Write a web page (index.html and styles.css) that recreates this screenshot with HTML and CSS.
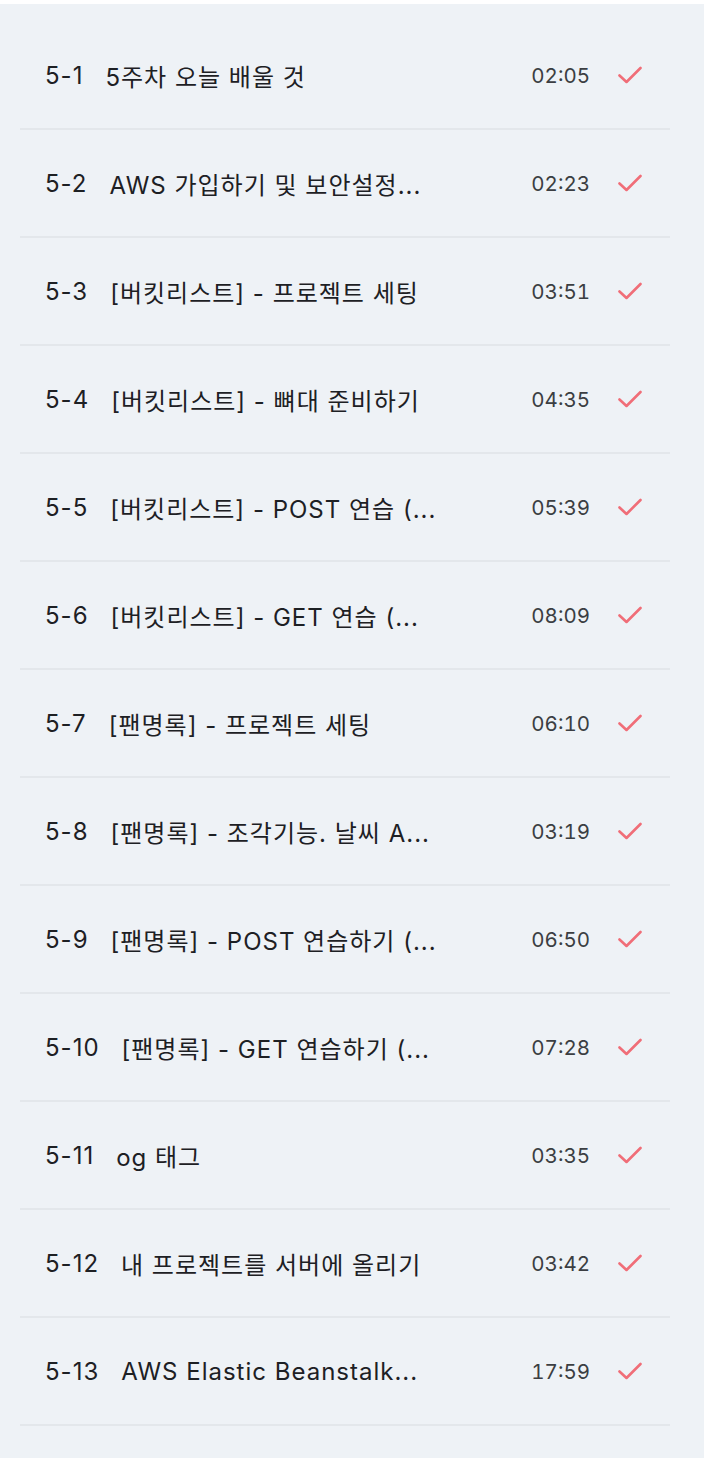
FILE: index.html
```html
<!DOCTYPE html>
<html lang="ko">
<head>
    <meta charset="UTF-8">
    <meta name="viewport" content="width=device-width, initial-scale=1.0">
    <title>5주차 강의 목록</title>
    <link rel="stylesheet" href="styles.css">
</head>
<body>
    <div class="panel">
        <ul class="lectures" id="lectures">
            <!-- lecture rows are inserted here -->
        </ul>
    </div>

    <script>
        const lectures = [
            { no: "5-1", title: "5주차 오늘 배울 것", time: "02:05" },
            { no: "5-2", title: "AWS 가입하기 및 보안설정...", time: "02:23" },
            { no: "5-3", title: "[버킷리스트] - 프로젝트 세팅", time: "03:51" },
            { no: "5-4", title: "[버킷리스트] - 뼈대 준비하기", time: "04:35" },
            { no: "5-5", title: "[버킷리스트] - POST 연습 (...", time: "05:39" },
            { no: "5-6", title: "[버킷리스트] - GET 연습 (...", time: "08:09" },
            { no: "5-7", title: "[팬명록] - 프로젝트 세팅", time: "06:10" },
            { no: "5-8", title: "[팬명록] - 조각기능. 날씨 A...", time: "03:19" },
            { no: "5-9", title: "[팬명록] - POST 연습하기 (...", time: "06:50" },
            { no: "5-10", title: "[팬명록] - GET 연습하기 (...", time: "07:28" },
            { no: "5-11", title: "og 태그", time: "03:35" },
            { no: "5-12", title: "내 프로젝트를 서버에 올리기", time: "03:42" },
            { no: "5-13", title: "AWS Elastic Beanstalk...", time: "17:59" }
        ];

        const list = document.getElementById('lectures');
        lectures.forEach(item => {
            const row = document.createElement('li');
            row.className = 'lecture';
            row.innerHTML = `
                <span class="lecture-no">${item.no}</span>
                <span class="lecture-title">${item.title}</span>
                <span class="lecture-time">${item.time}</span>
                <svg class="lecture-check" width="24" height="20" viewBox="0 0 24 20">
                    <path d="M1.5 10.5 L8.5 17 L22.5 3" fill="none" stroke="#f06e78" stroke-width="2.6" stroke-linecap="round" stroke-linejoin="round"/>
                </svg>
            `;
            list.appendChild(row);
        });
    </script>
</body>
</html>
```

FILE: styles.css
```css
* {
    box-sizing: border-box;
    margin: 0;
    padding: 0;
}

body {
    background-color: #ffffff;
    font-family: 'Inter', 'Noto Sans CJK KR', sans-serif;
    color: #1d2024;
}

.panel {
    margin-top: 4px;
    min-height: 1454px;
    background-color: #eef2f6;
    padding: 18px 34px 0 20px;
}

.lectures {
    list-style: none;
}

.lecture {
    display: flex;
    align-items: center;
    height: 108px;
    padding: 0 28px 0 25px;
    border-bottom: 2px solid #e3e7eb;
}

.lecture-no {
    font-size: 24px;
    letter-spacing: 1px;
    margin-right: 22px;
}

.lecture-title {
    flex: 1;
    font-size: 24px;
    letter-spacing: 1px;
    white-space: nowrap;
}

.lecture-time {
    font-size: 20.5px;
    font-variant-numeric: tabular-nums;
    color: #3b3e42;
    margin-right: 28px;
}

.lecture-check {
    display: block;
}
```
